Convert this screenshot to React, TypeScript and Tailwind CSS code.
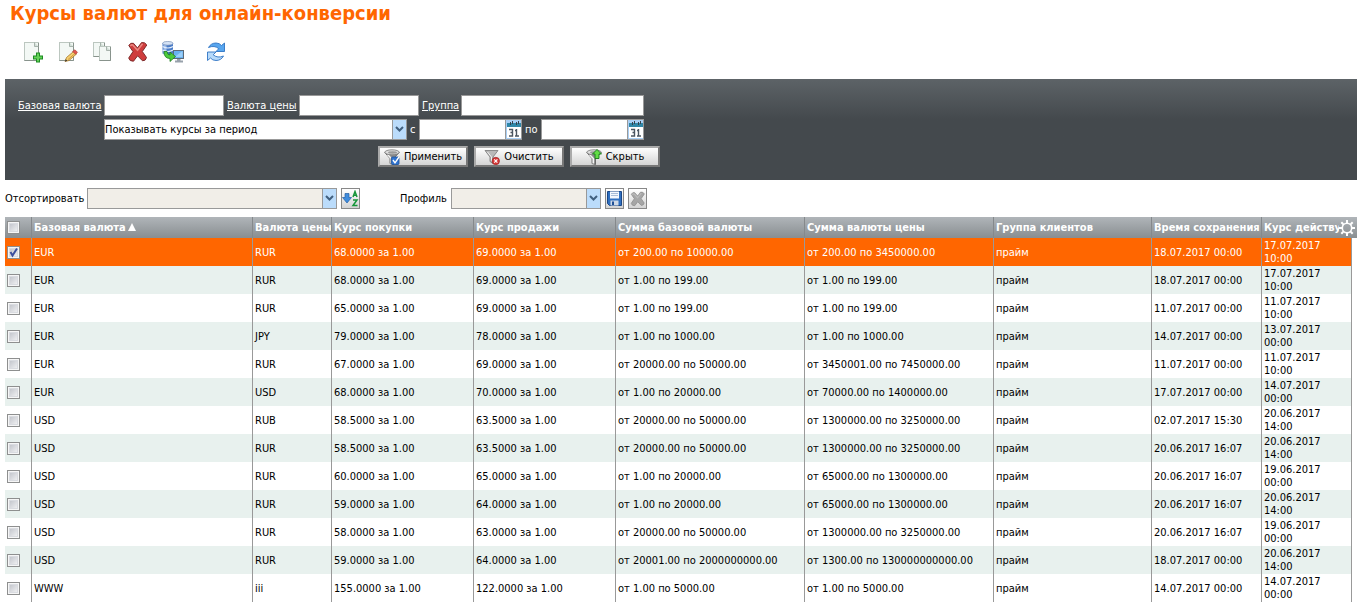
import React, { useState } from 'react';

interface Rate {
  base: string;
  quote: string;
  buy: string;
  sell: string;
  baseSum: string;
  quoteSum: string;
  saved: string;
  date: string;
  time: string;
}

const rates: Rate[] = [
  { base: 'EUR', quote: 'RUR', buy: '68.0000 за 1.00', sell: '69.0000 за 1.00', baseSum: 'от 200.00 по 10000.00', quoteSum: 'от 200.00 по 3450000.00', saved: '18.07.2017 00:00', date: '17.07.2017', time: '10:00' },
  { base: 'EUR', quote: 'RUR', buy: '68.0000 за 1.00', sell: '69.0000 за 1.00', baseSum: 'от 1.00 по 199.00', quoteSum: 'от 1.00 по 199.00', saved: '18.07.2017 00:00', date: '17.07.2017', time: '10:00' },
  { base: 'EUR', quote: 'RUR', buy: '65.0000 за 1.00', sell: '69.0000 за 1.00', baseSum: 'от 1.00 по 199.00', quoteSum: 'от 1.00 по 199.00', saved: '11.07.2017 00:00', date: '11.07.2017', time: '10:00' },
  { base: 'EUR', quote: 'JPY', buy: '79.0000 за 1.00', sell: '78.0000 за 1.00', baseSum: 'от 1.00 по 1000.00', quoteSum: 'от 1.00 по 1000.00', saved: '14.07.2017 00:00', date: '13.07.2017', time: '00:00' },
  { base: 'EUR', quote: 'RUR', buy: '67.0000 за 1.00', sell: '69.0000 за 1.00', baseSum: 'от 20000.00 по 50000.00', quoteSum: 'от 3450001.00 по 7450000.00', saved: '11.07.2017 00:00', date: '11.07.2017', time: '10:00' },
  { base: 'EUR', quote: 'USD', buy: '68.0000 за 1.00', sell: '70.0000 за 1.00', baseSum: 'от 1.00 по 20000.00', quoteSum: 'от 70000.00 по 1400000.00', saved: '17.07.2017 00:00', date: '14.07.2017', time: '00:00' },
  { base: 'USD', quote: 'RUB', buy: '58.5000 за 1.00', sell: '63.5000 за 1.00', baseSum: 'от 20000.00 по 50000.00', quoteSum: 'от 1300000.00 по 3250000.00', saved: '02.07.2017 15:30', date: '20.06.2017', time: '14:00' },
  { base: 'USD', quote: 'RUR', buy: '58.5000 за 1.00', sell: '63.5000 за 1.00', baseSum: 'от 20000.00 по 50000.00', quoteSum: 'от 1300000.00 по 3250000.00', saved: '20.06.2017 16:07', date: '20.06.2017', time: '14:00' },
  { base: 'USD', quote: 'RUR', buy: '60.0000 за 1.00', sell: '65.0000 за 1.00', baseSum: 'от 1.00 по 20000.00', quoteSum: 'от 65000.00 по 1300000.00', saved: '20.06.2017 16:07', date: '19.06.2017', time: '00:00' },
  { base: 'USD', quote: 'RUR', buy: '59.0000 за 1.00', sell: '64.0000 за 1.00', baseSum: 'от 1.00 по 20000.00', quoteSum: 'от 65000.00 по 1300000.00', saved: '20.06.2017 16:07', date: '20.06.2017', time: '14:00' },
  { base: 'USD', quote: 'RUR', buy: '58.0000 за 1.00', sell: '63.0000 за 1.00', baseSum: 'от 20000.00 по 50000.00', quoteSum: 'от 1300000.00 по 3250000.00', saved: '20.06.2017 16:07', date: '19.06.2017', time: '00:00' },
  { base: 'USD', quote: 'RUR', buy: '59.0000 за 1.00', sell: '64.0000 за 1.00', baseSum: 'от 20001.00 по 2000000000.00', quoteSum: 'от 1300.00 по 130000000000.00', saved: '18.07.2017 00:00', date: '20.06.2017', time: '14:00' },
  { base: 'WWW', quote: 'iii', buy: '155.0000 за 1.00', sell: '122.0000 за 1.00', baseSum: 'от 1.00 по 5000.00', quoteSum: 'от 1.00 по 5000.00', saved: '14.07.2017 00:00', date: '14.07.2017', time: '00:00' },
];

const columns = ['Базовая валюта', 'Валюта цены', 'Курс покупки', 'Курс продажи', 'Сумма базовой валюты', 'Сумма валюты цены', 'Группа клиентов', 'Время сохранения'];

const Sheet: React.FC<{ x?: number; y?: number; w?: number; h?: number }> = ({ x = 2, y = 1, w = 14, h = 18 }) => (
  <g>
    <rect x={x + 0.5} y={y + 0.5} width={w} height={h} fill="#f3f8f5" stroke="#bcc7c0" />
    <path d={`M${x + w + 0.5} ${y + 1}v${h - 0.5}H${x + 0.5}`} fill="none" stroke="#88938c" />
    <path d={`M${x + w - 3.5} ${y + 0.5}v4h4`} fill="#d3dfd8" stroke="#98a59d" strokeWidth="0.8" />
  </g>
);

const AddIcon = () => (
  <svg viewBox="0 0 22 22" className="w-[22px] h-[22px]">
    <Sheet />
    <path d="M14 11.500h4v3h3v4h-3v3h-4v-3h-3v-4h3z" fill="#1d8a22" />
    <path d="M15 12.500h2v3h3v2h-3v3h-2v-3h-3v-2h3z" fill="#63d257" />
  </svg>
);

const EditIcon = () => (
  <svg viewBox="0 0 22 22" className="w-[22px] h-[22px]">
    <Sheet />
    <path d="M8 20.500l1.500-4 7-6 3 2.500-7.500 6.500z" fill="#f6d070" stroke="#a5762a" strokeWidth="0.8" />
    <path d="M11 18.500l7-6" stroke="#c98d33" strokeWidth="0.8" />
    <path d="M15.500 10.500l2.500-1.700 2.500 2.500-1.700 2z" fill="#e2574f" stroke="#a83a35" strokeWidth="0.6" />
    <path d="M8 20.500l.7-2.200 1.700 1.500z" fill="#333" />
  </svg>
);

const CopyIcon = () => (
  <svg viewBox="0 0 22 22" className="w-[22px] h-[22px]">
    <Sheet x={1} y={1} w={11} h={14} />
    <Sheet x={7} y={5} w={11} h={14} />
  </svg>
);

const CrossShape: React.FC<{ fill: string; stroke: string; light: string }> = ({ fill, stroke, light }) => (
  <g strokeLinejoin="round">
    <path d="M1.800 4.500Q3.500 1.300 6.500 2.300L10.500 7 14.500 1.600Q18 .8 19.800 4L15.300 10.500 19.500 16.500Q18.800 20 15.500 19.800L10.600 14.800 6.500 20.200Q2.500 20.500 1.700 17L6 10.600z" fill={fill} stroke={stroke} />
    <path d="M3.800 4.500Q5 3.300 6 4.300l4.500 5 4.700-6" fill="none" stroke={light} strokeWidth="1.600" strokeLinecap="round" />
  </g>
);

const DeleteIcon = () => (
  <svg viewBox="0 0 22 22" className="w-[22px] h-[22px]">
    <CrossShape fill="#cf3d3d" stroke="#7d2b2b" light="#e98780" />
  </svg>
);

const ExportIcon = () => (
  <svg viewBox="0 0 22 22" className="w-[22px] h-[22px]">
    <path d="M.5 2v10.500q5.500 3.500 10.500 0V2z" fill="#4a7cc8" />
    <path d="M1.500 3v10q2 1.200 3 1.200V4z" fill="#9dbdec" />
    <ellipse cx="5.800" cy="2.300" rx="5.200" ry="1.900" fill="#d4e2f5" stroke="#6681ab" strokeWidth="0.6" />
    <path d="M.5 5.500q5.500 3 10.500 0M.5 9q5.500 3 10.500 0" fill="none" stroke="#e3eefb" strokeWidth="1.200" />
    <rect x="11.500" y="9.500" width="10" height="8" fill="#68b2f0" stroke="#5d6a78" />
    <path d="M12.500 16l8-6v6z" fill="#9bcffa" />
    <path d="M15 18h3.500v1.500H21V21.500h-8v-2h2z" fill="#98a1ab" />
    <path d="M2 10.500q0 7 6 7v3l5.500-5L8 11v3q-2.500 0-3-3.500z" fill="#4ccb3c" stroke="#1b7a1d" strokeWidth="0.8" />
  </svg>
);

const RefreshIcon = () => (
  <svg viewBox="0 0 22 22" className="w-[22px] h-[22px]" strokeLinejoin="round">
    <path d="M3.500 6.500Q6 2 11 2q3.500 0 5.500 2.500L19.500 2v8.500H11l2.800-2.800Q9.500 4 3.500 6.500z" fill="#58a6ee" stroke="#2f74c4" strokeWidth="0.9" />
    <path d="M18.500 15Q16 19.500 11 19.500q-3.500 0-5.500-2.500L2.500 19.500V11H11l-2.800 2.800Q12.500 17.500 18.500 15z" fill="#b7dafa" stroke="#2f74c4" strokeWidth="0.9" />
  </svg>
);

const FunnelIcon: React.FC<{ badge: 'apply' | 'clear' | 'hide' }> = ({ badge }) => (
  <svg viewBox="0 0 16 16" className="w-4 h-4 shrink-0">
    {badge === 'clear' ? (
      <g>
        <path d="M1 1.500h13L9 8v6.500l-3-2V8z" fill="#b9b9b9" stroke="#777" strokeWidth="0.8" />
        <path d="M3.500 3l4 5v4" fill="none" stroke="#eee" />
        <circle cx="11.800" cy="12" r="3.700" fill="#d83737" stroke="#921c1c" strokeWidth="0.6" />
        <path d="M10.200 10.400l3.200 3.200m0-3.200l-3.200 3.200" stroke="#fff" strokeWidth="1.200" />
      </g>
    ) : (
      <g>
        <path d="M.8 3.500l5.200 6v5l3.500 1V9.500l5.700-6z" fill="#8d8d8d" stroke="#555" strokeWidth="0.8" />
        <path d="M3.500 5.500l3.800 4v5" fill="none" stroke="#f5f5f5" strokeWidth="1.600" />
        <ellipse cx="8" cy="3.300" rx="7.200" ry="2.500" fill="#dedede" stroke="#777" strokeWidth="0.8" />
        <ellipse cx="8.500" cy="3.500" rx="4.500" ry="1.200" fill="#9a9a9a" />
      </g>
    )}
    {badge === 'apply' && (
      <g>
        <rect x="7.500" y="8" width="7.500" height="7.500" rx="1" fill="#2f73d0" stroke="#1b4f98" strokeWidth="0.8" />
        <path d="M9 11l2 2.800L15 8" fill="none" stroke="#fff" strokeWidth="1.400" />
      </g>
    )}
    {badge === 'hide' && <path d="M11 .5L15.500 5H13v4.500H9V5H6.500z" fill="#62dc46" stroke="#17791a" strokeWidth="0.9" />}
  </svg>
);

const CalendarIcon = () => (
  <svg viewBox="0 0 15 19" className="block w-[15px] h-[19px]">
    <rect width="15" height="19" fill="#a9cff5" />
    <rect x="1" y="6" width="14" height="12" fill="#fff" />
    <rect x="1" y="3" width="14" height="4" fill="#2f87a8" />
    <path d="M4.500 2v3M6.500 1v3M10.500 2v3M12.500 1v3" stroke="#37424c" />
    <path d="M3 9.500h3.500v3H4.500h2v3.500H3M10.500 9v7M9 10.500h1.500M9 16h4" fill="none" stroke="#4b5560" strokeWidth="1.400" />
  </svg>
);

const SortIcon = () => (
  <svg viewBox="0 0 17 17" className="block w-[17px] h-[17px]">
    <path d="M3 3.500h4v4h2.500L5 13 .5 7.500H3z" fill="#3f8cdd" stroke="#245fa5" strokeWidth="0.7" />
    <path d="M11 7l2-5.500L15 7M11.500 5.300h3M11 10h4l-4 5.500h4.500" fill="none" stroke="#17963a" strokeWidth="1.500" />
  </svg>
);

const SaveIcon = () => (
  <svg viewBox="0 0 17 17" className="block w-[17px] h-[17px]">
    <path d="M1.500 1.500h14v14h-12l-2-2z" fill="#2f6fc0" stroke="#1a4787" />
    <rect x="4" y="1.500" width="9" height="7" fill="#f3f7fd" />
    <path d="M5 3.500h7M5 5.500h7" stroke="#a9bdd8" />
    <rect x="4.500" y="10.500" width="8" height="5" fill="#cfd9e6" />
    <rect x="6" y="11.500" width="2" height="3.500" fill="#1f4f95" />
  </svg>
);

const GearIcon = () => (
  <svg viewBox="0 0 16 16" className="block w-4 h-4" stroke="#fff" fill="none">
    <circle cx="8" cy="8" r="4.700" strokeWidth="1.600" />
    <path d="M8 0v3M8 13v3M0 8h3M13 8h3M2.300 2.300l2 2M11.700 11.700l2 2M13.700 2.300l-2 2M4.300 11.700l-2 2" strokeWidth="2" />
  </svg>
);

const TickBox: React.FC<{ label: string; checked: boolean; onChange: () => void }> = ({ label, checked, onChange }) => (
  <label className="relative block w-[13px] h-[13px] ml-0.5">
    <input
      type="checkbox"
      aria-label={label}
      checked={checked}
      onChange={onChange}
      className="block appearance-none w-[13px] h-[13px] border border-[#8e8f8f] bg-linear-to-br from-[#b9bcc4] to-[#fafafa] shadow-[inset_0_0_0_1px_#f6f6f6,inset_0_0_0_2px_#d9dbe0]"
    />
    {checked && (
      <svg viewBox="0 0 13 13" className="absolute inset-0 w-[13px] h-[13px] pointer-events-none">
        <path d="M3.500 6l2 3.500 4.500-7" fill="none" stroke="#3b4f9e" strokeWidth="2" />
      </svg>
    )}
  </label>
);

const Select: React.FC<{ id: string; label?: string; muted?: boolean; className: string; children?: React.ReactNode }> = ({ id, label, muted, className, children }) => (
  <div className={`relative h-[21px] ${className}`}>
    <select id={id} aria-label={label} className={`appearance-none block w-full h-full border border-[#999] text-black pr-4 ${muted ? 'bg-[#f1eee8]' : 'bg-white'}`}>
      {children}
    </select>
    <span className="absolute right-px top-px bottom-px w-[14px] border-l border-[#999] bg-[#bbdcfb] flex items-center justify-center pointer-events-none">
      <svg viewBox="0 0 9 7" className="w-[9px] h-[7px]">
        <path d="M1 1l3.500 3.500L8 1" fill="none" stroke="#41607f" strokeWidth="2" />
      </svg>
    </span>
  </div>
);

const DateField: React.FC<{ label: string }> = ({ label }) => (
  <div className="flex h-[21px] w-[103px] border border-[#999] bg-white">
    <input type="text" aria-label={label} className="min-w-0 flex-1 text-black" />
    <button type="button" aria-label="Календарь" className="border-l border-[#999]"><CalendarIcon /></button>
  </div>
);

const field = 'h-[21px] border border-[#999] bg-white text-black';
const filterButton = 'flex items-center justify-center gap-1 w-[90px] h-[21px] border-2 border-t-[#aaa] border-l-[#aaa] border-r-[#777] border-b-[#777] bg-linear-to-b from-white to-[#d4d4d4] text-black';
const smallButton = 'flex items-center justify-center w-[19px] h-[21px] border border-[#888] bg-linear-to-b from-white to-[#d4d4d4]';
const cell = 'border-r border-[#999] pl-0.5 whitespace-nowrap overflow-hidden';

const App: React.FC = () => {
  const [selected, setSelected] = useState<number[]>([0]);

  const toggle = (index: number) => {
    setSelected(selected.includes(index) ? selected.filter(i => i !== index) : [...selected, index]);
  };

  const toggleAll = () => {
    setSelected(selected.length === rates.length ? [] : rates.map((_, i) => i));
  };

  return (
    <main className="bg-white text-black pl-[5px] pr-1 text-[11px] leading-[13px] font-['DejaVu_Sans_Condensed','DejaVu_Sans',sans-serif]">
      <h1 className="pl-[5px] h-[26px] text-[20px] leading-[26px] font-bold text-[#ff6600]">Курсы валют для онлайн-конверсии</h1>

      <div className="flex items-center gap-[13px] pl-[17px] pt-[15px] pb-4">
        <button type="button" aria-label="Добавить"><AddIcon /></button>
        <button type="button" aria-label="Изменить"><EditIcon /></button>
        <button type="button" aria-label="Копировать"><CopyIcon /></button>
        <button type="button" aria-label="Удалить"><DeleteIcon /></button>
        <button type="button" aria-label="Экспорт"><ExportIcon /></button>
        <button type="button" aria-label="Обновить" className="ml-2"><RefreshIcon /></button>
      </div>

      <form className="h-[101px] pt-4 pl-[13px] bg-linear-to-b from-[#5d6367] to-[#44494d] to-40% text-white" onSubmit={e => e.preventDefault()}>
        <div className="w-[642px] flex flex-col">
          <div className="flex items-center gap-[3px]">
            <label htmlFor="base" className="w-[83px] underline whitespace-nowrap">Базовая валюта</label>
            <input id="base" type="text" className={`${field} w-[120px]`} />
            <label htmlFor="quote" className="w-[69px] underline whitespace-nowrap">Валюта цены</label>
            <input id="quote" type="text" className={`${field} w-[120px]`} />
            <label htmlFor="group" className="w-9 underline">Группа</label>
            <input id="group" type="text" className={`${field} w-[183px]`} />
          </div>
          <div className="flex items-center gap-[3px] mt-[3px] pl-[86px]">
            <Select id="period" label="Период" className="w-[303px]">
              <option>Показывать курсы за период</option>
            </Select>
            <span className="w-[6px]">с</span>
            <DateField label="Дата с" />
            <span className="w-[13px]">по</span>
            <DateField label="Дата по" />
          </div>
          <div className="flex justify-end gap-[6px] mt-[6px]">
            <button type="submit" className={filterButton}><FunnelIcon badge="apply" />Применить</button>
            <button type="reset" className={filterButton}><FunnelIcon badge="clear" />Очистить</button>
            <button type="button" className={filterButton}><FunnelIcon badge="hide" />Скрыть</button>
          </div>
        </div>
      </form>

      <div className="flex items-center gap-1 py-2">
        <label htmlFor="sort" className="w-[78px] whitespace-nowrap">Отсортировать</label>
        <Select id="sort" muted className="w-[250px]" />
        <button type="button" aria-label="Сортировать" className={smallButton}><SortIcon /></button>
        <label htmlFor="profile" className="ml-9 w-[47px]">Профиль</label>
        <Select id="profile" muted className="w-[150px]" />
        <button type="button" aria-label="Сохранить профиль" className={smallButton}><SaveIcon /></button>
        <button type="button" aria-label="Удалить профиль" className={smallButton}>
          <svg viewBox="0 0 22 22" className="w-4 h-4"><CrossShape fill="#a6a6a6" stroke="#8a8a8a" light="#bbb" /></svg>
        </button>
      </div>

      <table className="w-full table-fixed border-separate border-spacing-0">
        <colgroup>
          <col className="w-[27px]" />
          <col />
          <col className="w-[79px]" />
          <col className="w-[142px]" />
          <col className="w-[142px]" />
          <col className="w-[189px]" />
          <col className="w-[189px]" />
          <col className="w-[158px]" />
          <col className="w-[110px]" />
          <col className="w-[90px]" />
          <col className="w-[5px]" />
        </colgroup>
        <thead>
          <tr className="h-[21px] bg-linear-to-b from-[#b0b5b9] to-[#898e91] text-white text-left">
            <th className="border-r border-[#85898c]">
              <TickBox label="Выбрать все" checked={selected.length === rates.length} onChange={toggleAll} />
            </th>
            {columns.map((name, i) => (
              <th key={name} className="border-r border-[#85898c] pl-0.5 whitespace-nowrap overflow-hidden">
                {name}
                {i === 0 && (
                  <svg viewBox="0 0 8 8" className="inline-block w-2 h-2 ml-0.5 align-baseline"><path d="M4 0l4 8H0z" fill="#fff" /></svg>
                )}
              </th>
            ))}
            <th colSpan={2} className="pl-0.5">
              <div className="flex items-center">
                <span className="flex-1 whitespace-nowrap overflow-hidden">Курс действует</span>
                <button type="button" aria-label="Настройка колонок" className="mr-0.5"><GearIcon /></button>
              </div>
            </th>
          </tr>
        </thead>
        <tbody>
          {rates.map((rate, i) => (
            <tr key={i} className={`h-7 ${selected.includes(i) ? 'text-white *:not-last:bg-[#ff6600]' : i % 2 ? '*:not-last:bg-[#e8f1ee]' : ''}`}>
              <td className="border-r border-[#999]">
                <TickBox label={`Строка ${i + 1}`} checked={selected.includes(i)} onChange={() => toggle(i)} />
              </td>
              <td className={cell}>{rate.base}</td>
              <td className={cell}>{rate.quote}</td>
              <td className={cell}>{rate.buy}</td>
              <td className={cell}>{rate.sell}</td>
              <td className={cell}>{rate.baseSum}</td>
              <td className={cell}>{rate.quoteSum}</td>
              <td className={cell}>прайм</td>
              <td className={cell}>{rate.saved}</td>
              <td className={cell}>{rate.date}<br />{rate.time}</td>
              <td></td>
            </tr>
          ))}
        </tbody>
      </table>
    </main>
  );
};

export default App;
